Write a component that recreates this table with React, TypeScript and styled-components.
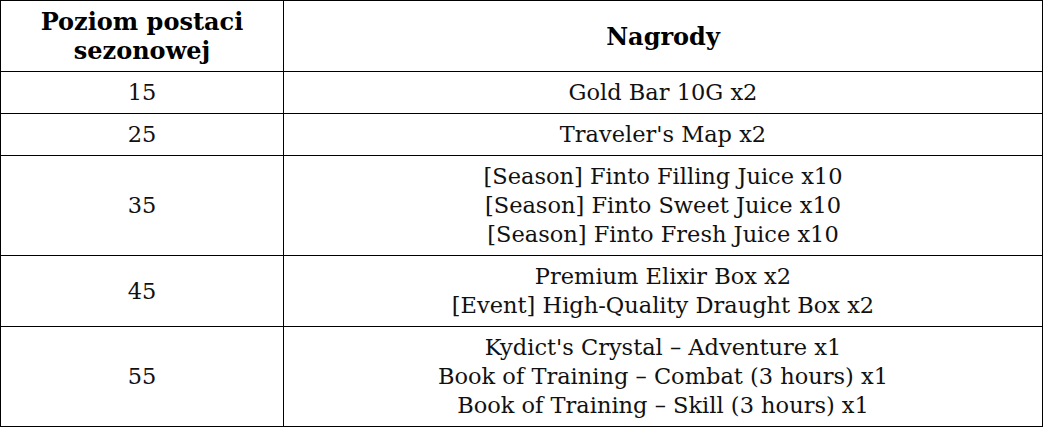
import React from "react";
import styled, { createGlobalStyle } from "styled-components";

const GlobalStyle = createGlobalStyle`
  html, body {
    margin: 0;
    padding: 0;
    background: #ffffff;
  }
`;

const Table = styled("table")`
  width: 1043px;
  border-collapse: collapse;
  table-layout: fixed;
  font-family: "DejaVu Serif", "Liberation Serif", serif;
  font-size: 22.5px;
  line-height: 29px;
  color: #111111;
`;

const HeadCell = styled("th")<{ $width?: number }>`
  width: ${({ $width }) => ($width ? `${$width}px` : "auto")};
  border: 1px solid #000000;
  padding: 6px 4px;
  font-size: 24px;
  font-weight: 700;
  text-align: center;
  color: #000000;
`;

const Cell = styled("td")`
  border: 1px solid #000000;
  padding: 6px 4px;
  text-align: center;
  vertical-align: middle;
`;

const Line = styled("div")`
  white-space: nowrap;
`;

type Row = { level: string; rewards: string[] };

const rows: Row[] = [
  { level: "15", rewards: ["Gold Bar 10G x2"] },
  { level: "25", rewards: ["Traveler's Map x2"] },
  {
    level: "35",
    rewards: [
      "[Season] Finto Filling Juice x10",
      "[Season] Finto Sweet Juice x10",
      "[Season] Finto Fresh Juice x10",
    ],
  },
  {
    level: "45",
    rewards: ["Premium Elixir Box x2", "[Event] High-Quality Draught Box x2"],
  },
  {
    level: "55",
    rewards: [
      "Kydict's Crystal – Adventure x1",
      "Book of Training – Combat (3 hours) x1",
      "Book of Training – Skill (3 hours) x1",
    ],
  },
];

export default function App() {
  return (
    <>
      <GlobalStyle />
      <Table>
        <thead>
          <tr>
            <HeadCell $width={274}>
              Poziom postaci
              <br />
              sezonowej
            </HeadCell>
            <HeadCell>Nagrody</HeadCell>
          </tr>
        </thead>
        <tbody>
          {rows.map((row) => (
            <tr key={row.level}>
              <Cell>{row.level}</Cell>
              <Cell>
                {row.rewards.map((r) => (
                  <Line key={r}>{r}</Line>
                ))}
              </Cell>
            </tr>
          ))}
        </tbody>
      </Table>
    </>
  );
}
